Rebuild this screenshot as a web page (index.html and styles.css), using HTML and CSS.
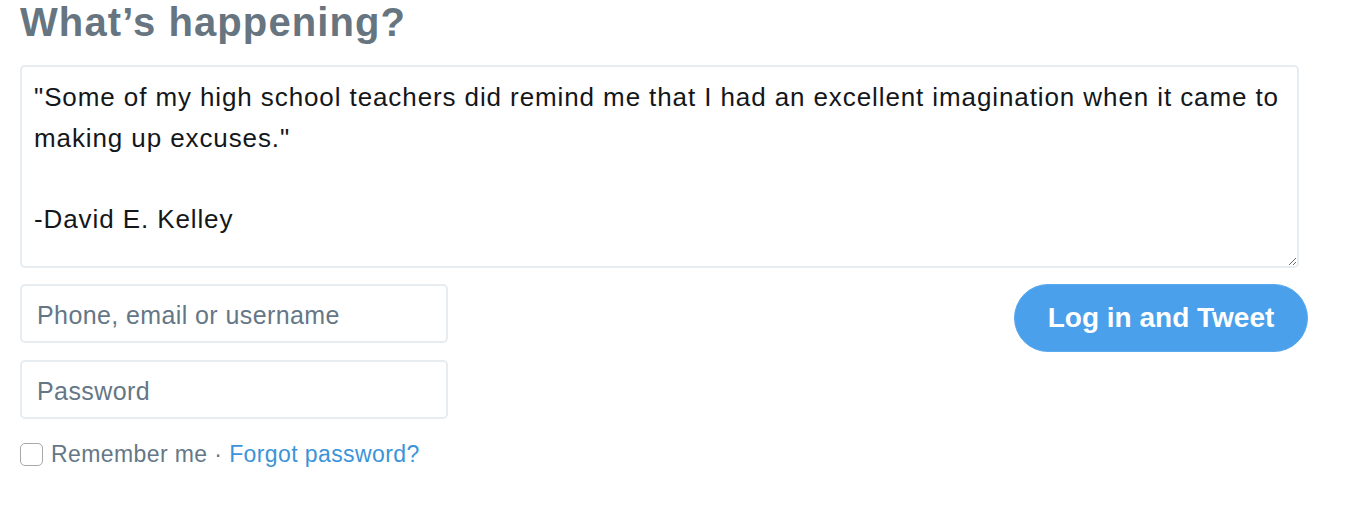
FILE: index.html
```html
<!DOCTYPE html>
<html>
<head>
<meta charset="utf-8">
<link rel="stylesheet" href="styles.css">
</head>
<body>
<div class="composer">
  <h2 class="title">What’s happening?</h2>
  <textarea class="tweet-box">"Some of my high school teachers did remind me that I had an excellent imagination when it came to making up excuses."

-David E. Kelley</textarea>
  <div class="login-row">
    <div class="fields">
      <input class="field" type="text" placeholder="Phone, email or username">
      <input class="field" type="password" placeholder="Password">
      <div class="remember">
        <input class="check" type="checkbox" id="rm">
        <label for="rm">Remember me</label>&nbsp;·&nbsp;<a class="forgot" href="#">Forgot password?</a>
      </div>
    </div>
    <button class="tweet-btn">Log in and Tweet</button>
  </div>
</div>
</body>
</html>
```
FILE: styles.css
```css
html, body {
  margin: 0;
  background: #fff;
  font-family: "Liberation Sans", Arial, sans-serif;
}
.composer {
  padding: 0 20px;
  width: 1288px;
}
.title {
  margin: 0;
  padding-top: 1px;
  font-size: 40px;
  letter-spacing: 1.1px;
  font-weight: bold;
  color: #66757f;
  line-height: 42px;
  height: 64px;
}
.tweet-box {
  display: block;
  box-sizing: border-box;
  width: 1279px;
  height: 203px;
  margin: 0;
  padding: 10px 12px;
  border: 2px solid #e6ecf0;
  border-radius: 5px;
  font-family: "Liberation Sans", Arial, sans-serif;
  font-size: 26px;
  letter-spacing: 0.9px;
  line-height: 40.5px;
  color: #14171a;
  outline: none;
  resize: both;
  overflow: hidden;
}
.login-row {
  display: flex;
  justify-content: space-between;
  align-items: flex-start;
  margin-top: 16px;
}
.fields {
  display: flex;
  flex-direction: column;
  gap: 17px;
  width: 428px;
}
.field {
  box-sizing: border-box;
  width: 428px;
  height: 59px;
  margin: 0;
  padding: 3px 15px 0;
  border: 2px solid #e6ecf0;
  border-radius: 5px;
  font-family: "Liberation Sans", Arial, sans-serif;
  font-size: 25px;
  letter-spacing: 0.4px;
  color: #14171a;
  outline: none;
}
.field::placeholder {
  color: #657786;
  opacity: 1;
}
.remember {
  display: flex;
  align-items: center;
  white-space: pre;
  margin-top: 5px;
  font-size: 23px;
  letter-spacing: 0.4px;
  color: #657786;
}
.check {
  appearance: none;
  -webkit-appearance: none;
  box-sizing: border-box;
  width: 23px;
  height: 23px;
  margin: 0 8px 0 0;
  border: 1.5px solid #a8a8a8;
  border-radius: 5px;
  background: #fff;
}
.forgot {
  color: #3b94d9;
  text-decoration: none;
}
.tweet-btn {
  box-sizing: border-box;
  width: 294px;
  height: 68px;
  margin: 0;
  border: 1px solid #5aaaef;
  border-radius: 34px;
  background: #4aa0ea;
  color: #fff;
  font-family: "Liberation Sans", Arial, sans-serif;
  font-size: 28px;
  font-weight: bold;
  cursor: pointer;
}
```
